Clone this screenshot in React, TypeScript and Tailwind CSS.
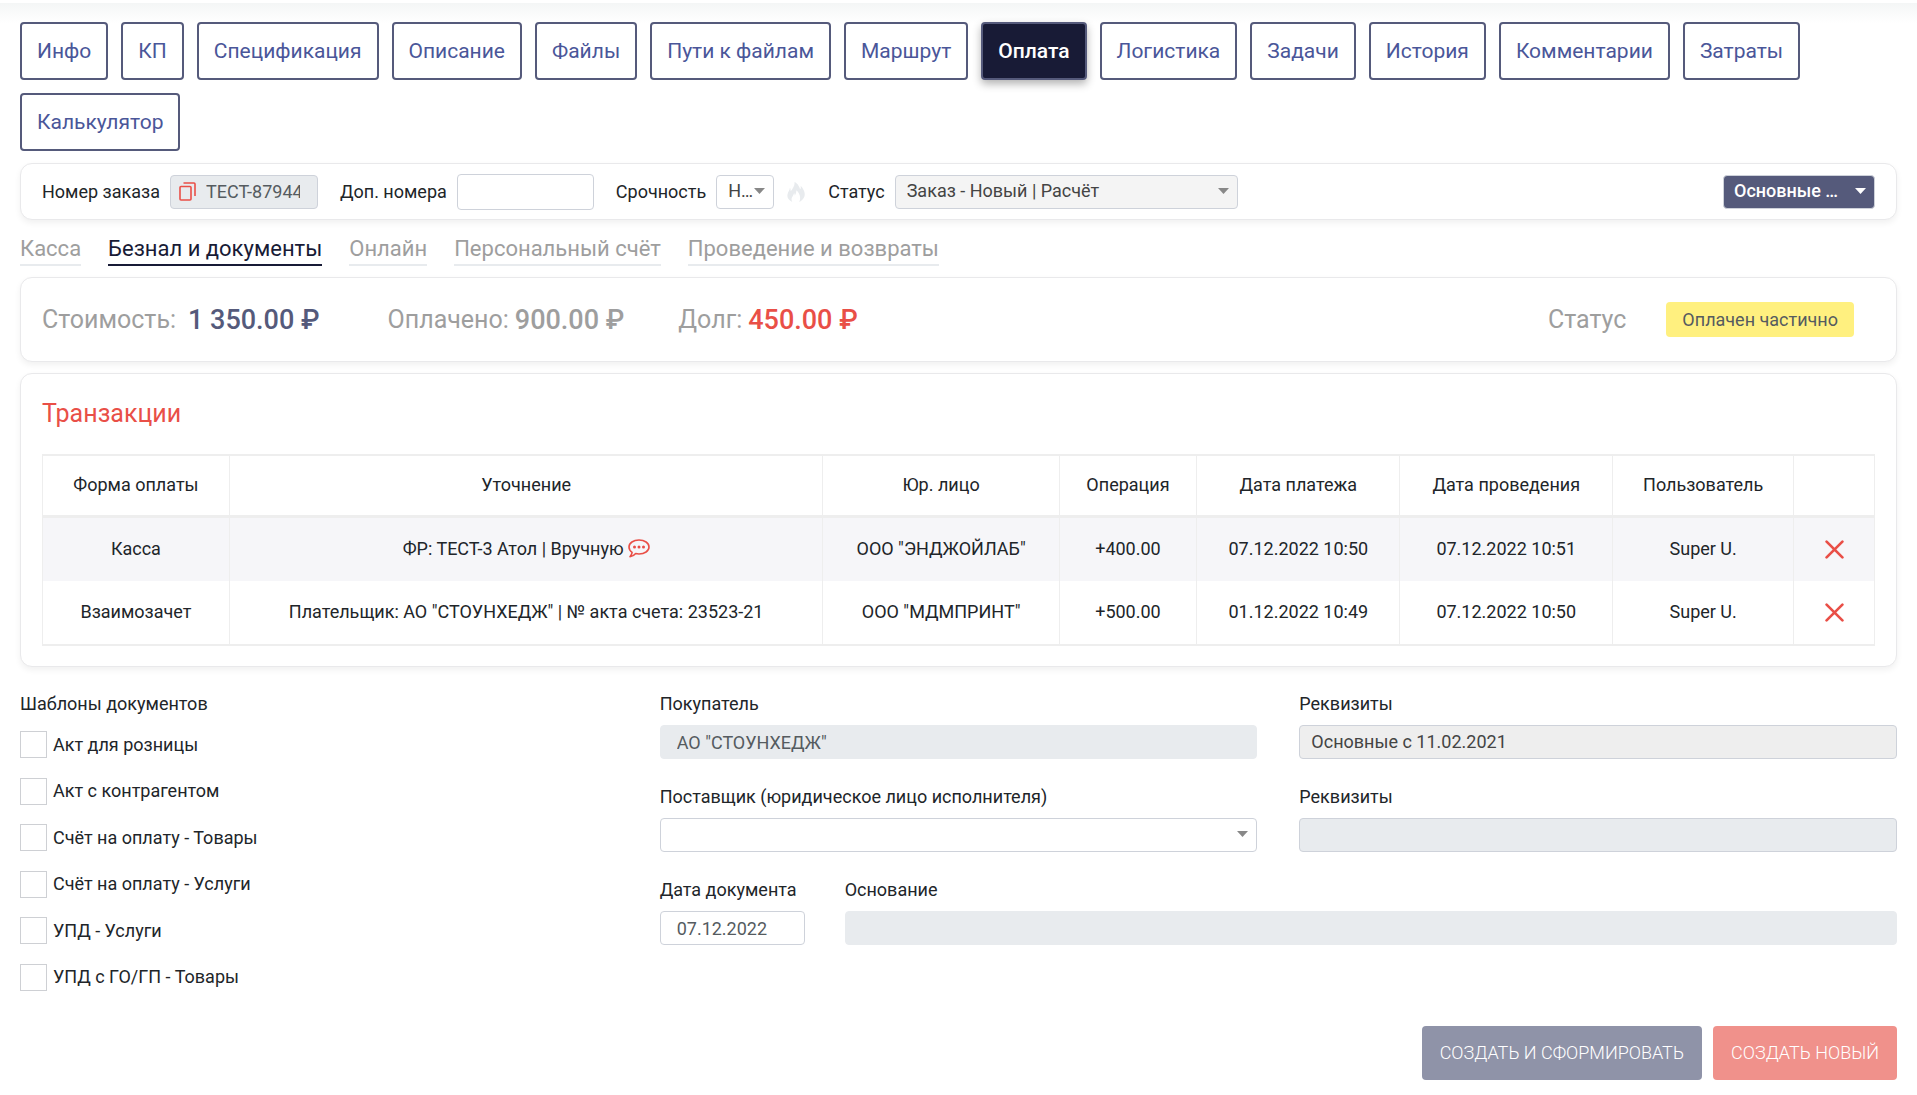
import React from 'react';
import { ImFire } from 'react-icons/im';

const tabs = [
  'Инфо', 'КП', 'Спецификация', 'Описание', 'Файлы', 'Пути к файлам', 'Маршрут', 'Оплата',
  'Логистика', 'Задачи', 'История', 'Комментарии', 'Затраты', 'Калькулятор',
];

const sections = ['Касса', 'Безнал и документы', 'Онлайн', 'Персональный счёт', 'Проведение и возвраты'];

const columns = [
  { title: 'Форма оплаты', width: 'w-[10.2%]' },
  { title: 'Уточнение', width: 'w-[32.4%]' },
  { title: 'Юр. лицо', width: 'w-[12.9%]' },
  { title: 'Операция', width: 'w-[7.5%]' },
  { title: 'Дата платежа', width: 'w-[11.1%]' },
  { title: 'Дата проведения', width: 'w-[11.6%]' },
  { title: 'Пользователь', width: 'w-[9.9%]' },
  { title: '', width: 'w-[4.4%]' },
];

const transactions = [
  {
    form: 'Касса',
    details: 'ФР: ТЕСТ-3 Атол | Вручную',
    comment: true,
    entity: 'ООО "ЭНДЖОЙЛАБ"',
    amount: '+400.00',
    paid: '07.12.2022 10:50',
    posted: '07.12.2022 10:51',
    user: 'Super U.',
  },
  {
    form: 'Взаимозачет',
    details: 'Плательщик: АО "СТОУНХЕДЖ" | № акта счета: 23523-21',
    comment: false,
    entity: 'ООО "МДМПРИНТ"',
    amount: '+500.00',
    paid: '01.12.2022 10:49',
    posted: '07.12.2022 10:50',
    user: 'Super U.',
  },
];

const templates = [
  'Акт для розницы',
  'Акт с контрагентом',
  'Счёт на оплату - Товары',
  'Счёт на оплату - Услуги',
  'УПД - Услуги',
  'УПД с ГО/ГП - Товары',
];

const card = 'rounded-xl border border-[#e9e9eb] bg-white shadow-[0_3px_6px_rgba(0,0,0,0.06)]';
const field = 'h-[34px] w-full rounded border px-4 text-[#555b60]';
const fieldLabel = 'mb-[9px] block';
const cell = 'border-r border-[#eeeeee] pb-[2px]';

const CopyIcon = () => (
  <svg className="h-[19px] w-[17px]" viewBox="0 0 17 19" fill="none" stroke="#e94f47" strokeWidth="1.6">
    <rect x="1" y="4.5" width="11" height="13.5" rx="1" />
    <path d="M4.5 1H15a1 1 0 0 1 1 1v12" />
  </svg>
);

const CommentIcon = () => (
  <svg className="h-[19px] w-[22px]" viewBox="0 0 22 19" fill="none" stroke="#e94f47" strokeWidth="1.6">
    <path d="M11 1c5.600 0 10 3 10 7s-4.400 7-10 7c-1.200 0-2.300-.1-3.300-.4-1.400 1.700-3.400 3-5.700 3.200 1.100-1.300 1.900-2.900 2.100-4.500C2.200 12 1 10.200 1 8c0-4 4.400-7 10-7z" strokeLinejoin="round" />
    <g fill="#e94f47" stroke="none">
      <circle cx="6.500" cy="8" r="1.500" />
      <circle cx="11" cy="8" r="1.500" />
      <circle cx="15.500" cy="8" r="1.500" />
    </g>
  </svg>
);

const CrossIcon = () => (
  <svg className="h-[19px] w-[19px]" viewBox="0 0 18 18" fill="none" stroke="#e94f47" strokeWidth="2.500" strokeLinecap="round">
    <path d="M1.500 1.500l15 15M16.500 1.500l-15 15" />
  </svg>
);

type SelectProps = {
  id: string;
  value: string;
  className: string;
  arrow?: string;
  label?: string;
};

const Select = ({ id, value, className, arrow = 'fill-[#888888]', label }: SelectProps) => (
  <div className="relative">
    <select
      id={id}
      aria-label={label}
      className={`block h-[34px] appearance-none rounded border pb-[2px] ${className}`}
    >
      <option>{value}</option>
    </select>
    <svg className={`pointer-events-none absolute top-[13px] right-[9px] h-[6px] w-[11px] ${arrow}`} viewBox="0 0 11 6">
      <path d="M0 0h11L5.500 6z" />
    </svg>
  </div>
);

const App = () => {
  return (
    <div className="bg-white pt-[3px] font-['Roboto',sans-serif] text-lg leading-6 text-[#212529]">
      <div className="bg-linear-to-b from-[#f4f6f6] to-white to-[20px] px-5 pt-[19px] pb-[15px]">
        <nav className="flex flex-wrap gap-[13px]">
          {tabs.map((tab) => (
            <button
              key={tab}
              className={`h-[58px] rounded border-2 border-[#555a7b] px-[15px] text-[21px] ${
                tab === 'Оплата'
                  ? 'bg-[#181b36] font-medium text-white shadow-[0_4px_8px_rgba(0,0,0,0.3)]'
                  : 'bg-white text-[#4a5699]'
              }`}
            >
              {tab}
            </button>
          ))}
        </nav>

        {/* Order bar */}
        <div className={`${card} mt-3 flex h-[57px] items-center px-[21px]`}>
          <label htmlFor="order">Номер заказа</label>
          <div className="ml-[10px] flex h-[34px] w-[148px] items-center rounded border border-[#ced2da] bg-[#e8ebee] pr-[17px] pl-2">
            <button aria-label="Скопировать" className="mr-[10px]">
              <CopyIcon />
            </button>
            <input id="order" readOnly defaultValue="ТЕСТ-87944" className="min-w-0 flex-1 text-[#555b60]" />
          </div>
          <label htmlFor="extra" className="ml-[22px]">Доп. номера</label>
          <input id="extra" className="ml-[10px] h-9 w-[137px] rounded border border-[#ced2da] px-3" />
          <label htmlFor="urgency" className="mr-[10px] ml-[22px]">Срочность</label>
          <Select id="urgency" value="Н…" className="w-[58px] border-[#ced2da] bg-white pl-[11px] text-[#444444]" />
          <ImFire className="ml-3 h-5 w-5 text-[#e8ebee]" />
          <label htmlFor="status" className="mr-[10px] ml-[22px]">Статус</label>
          <Select
            id="status"
            value="Заказ - Новый | Расчёт"
            className="w-[343px] border-[#ced2da] bg-[#f4f4f4] pl-[11px] text-[#444444]"
          />
          <div className="ml-auto">
            <Select
              id="group"
              label="Раздел"
              value="Основные …"
              arrow="fill-white"
              className="w-[152px] border-[#ced2da] bg-[#555a7b] pl-[10px] font-medium text-white"
            />
          </div>
        </div>

        {/* Payment sections */}
        <nav className="mt-[14px] flex h-[43px] items-start gap-[27px] text-[22px] leading-[30px]">
          {sections.map((section) => (
            <a
              key={section}
              href="#"
              className={
                section === 'Безнал и документы'
                  ? 'border-b-2 border-[#181b36] text-[#181b36]'
                  : 'border-b-2 border-[#e8ebee] text-[#9e9e9e]'
              }
            >
              {section}
            </a>
          ))}
        </nav>

        <div className={`${card} flex h-[85px] items-center px-[21px] text-[25px] text-[#9e9e9e]`}>
          <span>Стоимость:</span>
          <span className="ml-3 text-[27px] font-medium text-[#555a7b]">1 350.00 ₽</span>
          <span className="ml-[68px]">Оплачено:</span>
          <span className="ml-[6px] text-[27px] font-medium">900.00 ₽</span>
          <span className="ml-[54px]">Долг:</span>
          <span className="ml-[6px] text-[27px] font-medium text-[#e94f47]">450.00 ₽</span>
          <span className="ml-auto">Статус</span>
          <span className="mr-[21px] ml-10 flex h-[35px] items-center rounded bg-[#fff07f] px-4 text-lg text-[#555b60]">
            Оплачен частично
          </span>
        </div>

        <section className={`${card} mt-[11px] px-[21px] pt-[25px] pb-5`}>
          <h2 className="text-[25px] leading-[30px] text-[#e94f47]">Транзакции</h2>
          <table className="mt-[25px] w-full table-fixed border-separate border-spacing-0 border-y-2 border-l border-[#eeeeee] text-center">
            <thead>
              <tr className="h-[62px]">
                {columns.map((column) => (
                  <th key={column.title} className={`${cell} ${column.width} border-b-3 font-normal`}>
                    {column.title}
                  </th>
                ))}
              </tr>
            </thead>
            <tbody>
              {transactions.map((item) => (
                <tr key={item.form} className="h-[63px] odd:bg-[#f6f6f9]">
                  <td className={cell}>{item.form}</td>
                  <td className={cell}>
                    <div className="flex items-center justify-center gap-1">
                      {item.details}
                      {item.comment && <CommentIcon />}
                    </div>
                  </td>
                  <td className={cell}>{item.entity}</td>
                  <td className={cell}>{item.amount}</td>
                  <td className={cell}>{item.paid}</td>
                  <td className={cell}>{item.posted}</td>
                  <td className={cell}>{item.user}</td>
                  <td className="border-r border-[#eeeeee]">
                    <button aria-label="Удалить" className="mx-auto block">
                      <CrossIcon />
                    </button>
                  </td>
                </tr>
              ))}
            </tbody>
          </table>
        </section>

        {/* Documents */}
        <div className="mt-[25px] grid grid-cols-3 gap-x-[42px]">
          <fieldset>
            <legend>Шаблоны документов</legend>
            <div className="mt-[15px] flex h-[260px] flex-col justify-between">
              {templates.map((template) => (
                <label key={template} className="flex items-center gap-[6px]">
                  <input type="checkbox" className="h-[27px] w-[27px] appearance-none border border-[#ced0d4] bg-white" />
                  {template}
                </label>
              ))}
            </div>
          </fieldset>

          <div className="col-span-2 grid grid-cols-2 content-start gap-x-[42px] gap-y-[26px]">
            <div>
              <label htmlFor="buyer" className={fieldLabel}>Покупатель</label>
              <input
                id="buyer"
                readOnly
                defaultValue={'АО "СТОУНХЕДЖ"'}
                className={`${field} block border-[#e8ebee] bg-[#e8ebee]`}
              />
            </div>
            <div>
              <label htmlFor="buyer-details" className={fieldLabel}>Реквизиты</label>
              <select
                id="buyer-details"
                className="block h-[34px] w-full appearance-none rounded border border-[#ced2da] bg-[#eeeeee] px-[11px] text-[#444444]"
              >
                <option>Основные с 11.02.2021</option>
              </select>
            </div>
            <div>
              <label htmlFor="supplier" className={fieldLabel}>Поставщик (юридическое лицо исполнителя)</label>
              <Select id="supplier" value="" className="w-full border-[#ced2da] bg-white" />
            </div>
            <div>
              <label htmlFor="supplier-details" className={fieldLabel}>Реквизиты</label>
              <input id="supplier-details" readOnly className={`${field} block border-[#ced2da] bg-[#e8ebee]`} />
            </div>
            <div className="col-span-2 flex gap-10">
              <div className="w-[145px]">
                <label htmlFor="date" className={fieldLabel}>Дата документа</label>
                <input id="date" defaultValue="07.12.2022" className={`${field} block border-[#ced2da] bg-white`} />
              </div>
              <div className="flex-1">
                <label htmlFor="reason" className={fieldLabel}>Основание</label>
                <input id="reason" readOnly className={`${field} block border-[#e8ebee] bg-[#e8ebee]`} />
              </div>
            </div>
          </div>
        </div>

        <div className="mt-[35px] flex justify-end gap-[11px] font-light text-white">
          <button className="h-[54px] rounded bg-[#8f93a8] px-[18px] uppercase">Создать и сформировать</button>
          <button className="h-[54px] rounded bg-[#f0918b] px-[18px] uppercase">Создать новый</button>
        </div>
      </div>
    </div>
  );
};

export default App;
